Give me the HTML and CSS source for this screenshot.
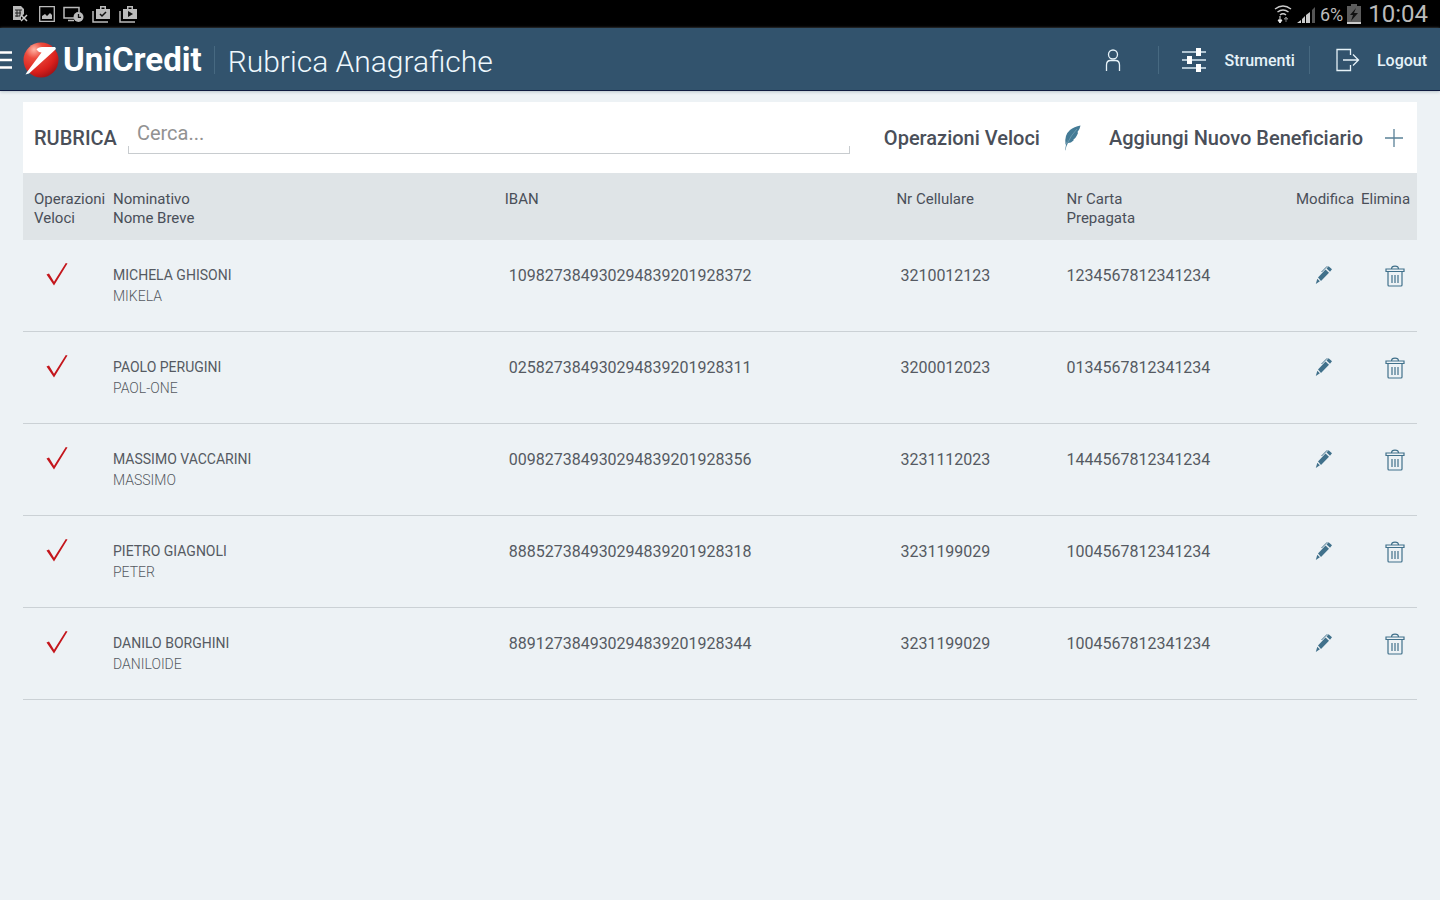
FILE: index.html
```html
<!DOCTYPE html>
<html lang="it">
<head>
<meta charset="utf-8">
<meta name="viewport" content="width=device-width, initial-scale=1">
<title>Rubrica Anagrafiche</title>
<link rel="stylesheet" href="styles.css">
</head>
<body>
<svg class="sprite" aria-hidden="true">
  <symbol id="check" viewBox="0 0 22 24"><path d="M.5 12.500 L3 11.500 L8 19.800 L19.800 1 L21.500 1.500 L8 23.500 Z" fill="#c4161c"/></symbol>
  <symbol id="pencil" viewBox="0 0 18 20"><path d="M3 12.500 L10.500 4.500 L14 7.700 L6 16 Z M2.300 13.700 L4.900 16.300 L.8 19 Z M11.500 3.500 L13.600 1.200 L17 4.200 L15 6.700 Z" fill="#41718b"/><path d="M6.500 7 L12.300 1.200" stroke="#41718b" fill="none"/></symbol>
  <symbol id="trash" viewBox="0 0 20 22"><g fill="none" stroke="#41718b" stroke-width="1.200"><path d="M1 4h18v2.500H1zM6.500 4C6.500 .2 13.500 .2 13.500 4M3 6.500V20q0 1 1 1h12q1 0 1-1V6.500M7 10v8M10 10v8M13 10v8"/></g></symbol>
</svg>

<div class="status">
  <div class="status-group notices">
    <svg width="16" height="18" viewBox="0 0 16 18"><path d="M1 1h8l3 3v5l-3 3v3H1z" fill="#bbb"/><path d="M3 5h7M3 8h6M3 11h5M5 5v7M8 5v6" stroke="#222"/><path d="M9 10l6 6M15 10l-6 6" stroke="#ccc" stroke-width="1.500"/></svg>
    <svg width="16" height="16" viewBox="0 0 16 16"><path d="M.7 .7h14.600v14.600H.7z" fill="none" stroke="#bbb" stroke-width="1.300"/><path d="M3 13V10l3-2 2 2 3-3 2 2v4z" fill="#bbb"/></svg>
    <svg width="21" height="17" viewBox="0 0 21 17"><path d="M11 12H1V1.500h15V6M5 14.500h6" fill="none" stroke="#bbb" stroke-width="1.500"/><circle cx="15.500" cy="11" r="5" fill="#bbb"/><path d="M15.500 8v3.300H18" fill="none" stroke="#111" stroke-width="1.300"/></svg>
    <svg width="19" height="18" viewBox="0 0 19 18"><path d="M4 4h4V1h6v3h4v10H4zM9.500 2.500V4h3V2.500z" fill="#bbb" fill-rule="evenodd"/><path d="M1 6v11h15" fill="none" stroke="#bbb" stroke-width="1.500"/><path d="M8 9l2 2 4-4" fill="none" stroke="#111" stroke-width="1.500"/></svg>
    <svg width="19" height="18" viewBox="0 0 19 18"><path d="M4 4h4V1h6v3h4v10H4zM9.500 2.500V4h3V2.500z" fill="#bbb" fill-rule="evenodd"/><path d="M1 6v11h15" fill="none" stroke="#bbb" stroke-width="1.500"/><path d="M9 6l5 3-5 3z" fill="#111"/></svg>
  </div>
  <div class="status-group signals">
    <svg width="18" height="20" viewBox="0 0 18 20"><g fill="none" stroke="#ccc" stroke-width="1.500"><path d="M1 5q8-6 16 0M3.500 8q5.500-4 11 0M6 11q3-2.500 6 0"/></g><path d="M6 12v5M4 16l2 3 2-3z" stroke="#eee" fill="#eee"/><path d="M12 18v-4M10 15l2-2 2 2z" stroke="#777" fill="#777"/></svg>
    <svg width="20" height="19" viewBox="0 0 20 19"><path d="M1 18l4-3v3zM6 18v-4l3-3v7zM10 18v-8l4-3v11z" fill="#ccc"/><path d="M16 18V5l3-3v16z" fill="#555"/></svg>
    <span class="percent">6%</span>
    <svg width="14" height="20" viewBox="0 0 14 20"><path d="M4 0h6v2h4v16H0V2h4z" fill="#5c5c5c"/><path d="M0 18h14v2H0z" fill="#ccc"/><path d="M9 4L3 11h3l-2 6 7-8H7z" fill="#111"/></svg>
    <span class="clock">10:04</span>
  </div>
</div>

<header class="topbar">
  <button class="menu" aria-label="Menu"><svg width="12" height="18" viewBox="0 0 12 18"><path d="M0 1.500h12M0 9h12M0 16.500h12" stroke="#fff" stroke-width="2.400"/></svg></button>
  <a class="brand" href="#">
    <svg width="36" height="36" viewBox="0 0 36 36" aria-hidden="true"><defs><radialGradient id="ball" cx=".3" cy=".2" r=".85"><stop offset="0" stop-color="#ffb5a5"/><stop offset=".3" stop-color="#ec4b3d"/><stop offset=".75" stop-color="#d9201c"/><stop offset="1" stop-color="#a51316"/></radialGradient></defs><circle cx="18" cy="18" r="17.500" fill="url(#ball)"/><path d="M13.500 7.500Q15 5 19 5H32q1.500 1 .5 2.500L6 31.500 2.500 32.500 4 30 18.500 10.500Q15 10 13.500 7.500Z" fill="#fff"/></svg>
    <span>UniCredit</span>
  </a>
  <h1>Rubrica Anagrafiche</h1>
  <nav>
    <button class="user" aria-label="Profilo"><svg width="16" height="23" viewBox="0 0 16 23"><g fill="none" stroke="#e6f2f8" stroke-width="1.300"><circle cx="8" cy="5.500" r="4.500"/><path d="M1.500 22v-6q0-4.500 4-4.500h5q4 0 4 4.500v6"/></g></svg></button>
    <button class="tools"><svg width="24" height="26" viewBox="0 0 24 26"><path d="M0 5h24M0 13h24M0 21h24" stroke="#dcecf4" stroke-width="1.500"/><path d="M14 1h5v8h-5zM5 9h5v8H5zM14 17h5v8h-5z" fill="#fff"/></svg>Strumenti</button>
    <button class="logout"><svg width="24" height="24" viewBox="0 0 24 24"><path d="M14.500 7V1.500H1v21h13.500V17M7 12h15.500M17 6.500l5.500 5.500-5.500 5.500" fill="none" stroke="#e6f2f8" stroke-width="1.300"/></svg>Logout</button>
  </nav>
</header>

<main>
  <div class="toolbar">
    <label for="search">RUBRICA</label>
    <div class="field"><input id="search" type="text" placeholder="Cerca..."></div>
    <button class="quick">Operazioni Veloci<svg width="17" height="26" viewBox="0 0 17 26"><path d="M1 25.500Q1.500 19 4 14L1.500 20Q0 10 6 5 10 1.500 16.500 .5 16 4 13.500 7L14 8Q12 13 9.500 14.500L9.500 15.500Q7 18 4 18 2 21 1.500 25Z" fill="#447b96"/><path d="M3 19Q7 10 13 4" fill="none" stroke="#7ba5b8" stroke-width=".7"/></svg></button>
    <button class="add">Aggiungi Nuovo Beneficiario<svg width="18" height="18" viewBox="0 0 18 18"><path d="M9 0v18M0 9h18" stroke="#5a8197" stroke-width="1.300"/></svg></button>
  </div>

  <table>
    <colgroup><col class="c-check"><col class="c-name"><col class="c-iban"><col class="c-phone"><col><col class="c-edit"><col class="c-delete"></colgroup>
    <thead>
      <tr><th>Operazioni Veloci</th><th>Nominativo<br>Nome Breve</th><th>IBAN</th><th>Nr Cellulare</th><th>Nr Carta<br>Prepagata</th><th>Modifica</th><th>Elimina</th></tr>
    </thead>
    <tbody>
      <tr><td><svg class="check"><use href="#check"/></svg></td><td class="name">MICHELA GHISONI<span>MIKELA</span></td><td class="inset">109827384930294839201928372</td><td class="inset">3210012123</td><td>1234567812341234</td><td><button aria-label="Modifica"><svg class="pencil"><use href="#pencil"/></svg></button></td><td><button aria-label="Elimina"><svg class="trash"><use href="#trash"/></svg></button></td></tr>
      <tr><td><svg class="check"><use href="#check"/></svg></td><td class="name">PAOLO PERUGINI<span>PAOL-ONE</span></td><td class="inset">025827384930294839201928311</td><td class="inset">3200012023</td><td>0134567812341234</td><td><button aria-label="Modifica"><svg class="pencil"><use href="#pencil"/></svg></button></td><td><button aria-label="Elimina"><svg class="trash"><use href="#trash"/></svg></button></td></tr>
      <tr><td><svg class="check"><use href="#check"/></svg></td><td class="name">MASSIMO VACCARINI<span>MASSIMO</span></td><td class="inset">009827384930294839201928356</td><td class="inset">3231112023</td><td>1444567812341234</td><td><button aria-label="Modifica"><svg class="pencil"><use href="#pencil"/></svg></button></td><td><button aria-label="Elimina"><svg class="trash"><use href="#trash"/></svg></button></td></tr>
      <tr><td><svg class="check"><use href="#check"/></svg></td><td class="name">PIETRO GIAGNOLI<span>PETER</span></td><td class="inset">888527384930294839201928318</td><td class="inset">3231199029</td><td>1004567812341234</td><td><button aria-label="Modifica"><svg class="pencil"><use href="#pencil"/></svg></button></td><td><button aria-label="Elimina"><svg class="trash"><use href="#trash"/></svg></button></td></tr>
      <tr><td><svg class="check"><use href="#check"/></svg></td><td class="name">DANILO BORGHINI<span>DANILOIDE</span></td><td class="inset">889127384930294839201928344</td><td class="inset">3231199029</td><td>1004567812341234</td><td><button aria-label="Modifica"><svg class="pencil"><use href="#pencil"/></svg></button></td><td><button aria-label="Elimina"><svg class="trash"><use href="#trash"/></svg></button></td></tr>
    </tbody>
  </table>
</main>
</body>
</html>
```
FILE: styles.css
```css
* { box-sizing: border-box; }
body { margin: 0; background: #edf2f5; color: #4a4f59; font-family: Roboto, sans-serif; font-size: 16px; }
button { display: flex; align-items: center; margin: 0; padding: 0; border: 0; background: none; color: inherit; font: inherit; cursor: pointer; white-space: nowrap; }
svg { display: block; flex: none; }
.sprite { display: none; }

.status { display: flex; justify-content: space-between; height: 28px; padding: 0 12px; background: #000; color: #bbb; }
.status-group { display: flex; align-items: center; }
.notices { gap: 8px; }
.notices svg:first-child { margin-right: 3px; }
.signals { gap: 4px; }
.percent { font-size: 18px; }
.clock { margin-left: 3px; font-size: 24px; }

.topbar { display: flex; align-items: center; height: 63px; padding-top: 2px; border-bottom: 1px solid #101c40; background: #32536d; color: #fff; box-shadow: 0 1px 3px #b9c4cb; }
.brand { display: flex; align-items: center; gap: 4px; margin-left: 11px; color: #fff; text-decoration: none; font-size: 33px; font-weight: 700; line-height: 44px; }
h1 { margin: 0 0 0 12px; padding: 4px 0 0 13px; border-left: 1px solid #476981; font-size: 30px; font-weight: 300; line-height: 24px; white-space: nowrap; color: #eef8fd; }
nav { display: flex; align-items: center; margin-left: auto; padding-right: 13px; font-weight: 500; color: #e6f2f8; }
nav button { height: 28px; }
.user { padding-right: 37px; }
.tools { gap: 19px; padding: 0 14px 0 23px; border: solid #476981; border-width: 0 1px; }
.logout { gap: 17px; padding-left: 26px; }

main { padding: 11px 23px 0; }
.toolbar { display: flex; align-items: center; height: 71px; padding: 0 14px 0 11px; background: #fff; font-size: 20px; font-weight: 500; }
.field { position: relative; flex: 1; margin: 0 34px 0 11px; }
.field::after { content: ""; position: absolute; right: 0; bottom: 0; left: 0; height: 7px; border: solid #c8cccf; border-width: 0 1px 1px; pointer-events: none; }
.field input { display: block; width: 100%; height: 32px; padding: 0 9px 9px; border: 0; background: none; font: 400 20px Roboto, sans-serif; color: #4a4f59; outline: none; }
.field input::placeholder { color: #929292; opacity: 1; }
.quick { gap: 24px; }
.add { gap: 22px; margin-left: 28px; }

table { width: 100%; table-layout: fixed; border-collapse: separate; border-spacing: 0; }
.c-check { width: 90px; }
.c-name, .c-iban { width: 28.1%; }
.c-phone { width: 12.2%; }
.c-edit { width: 65px; }
.c-delete { width: 56px; }
th { height: 67px; padding: 17px 0 0; background: #dfe4e7; font-size: 15px; font-weight: 400; line-height: 19px; text-align: left; vertical-align: top; }
th:first-child { padding-left: 11px; }
td { height: 92px; padding: 25px 0 0; border-bottom: 1px solid #cbd1d5; line-height: 21px; vertical-align: top; color: #555a62; }
td:first-child { padding: 22px 0 0 23px; }
td.inset { padding-left: 4px; }
.name { font-size: 14px; }
.name span { display: block; font-weight: 300; }
td:nth-last-child(2) button { margin-left: 19px; }
td:last-child button { margin-left: 24px; }
.check { width: 22px; height: 24px; }
.pencil { width: 18px; height: 20px; }
.trash { width: 20px; height: 22px; }
```
